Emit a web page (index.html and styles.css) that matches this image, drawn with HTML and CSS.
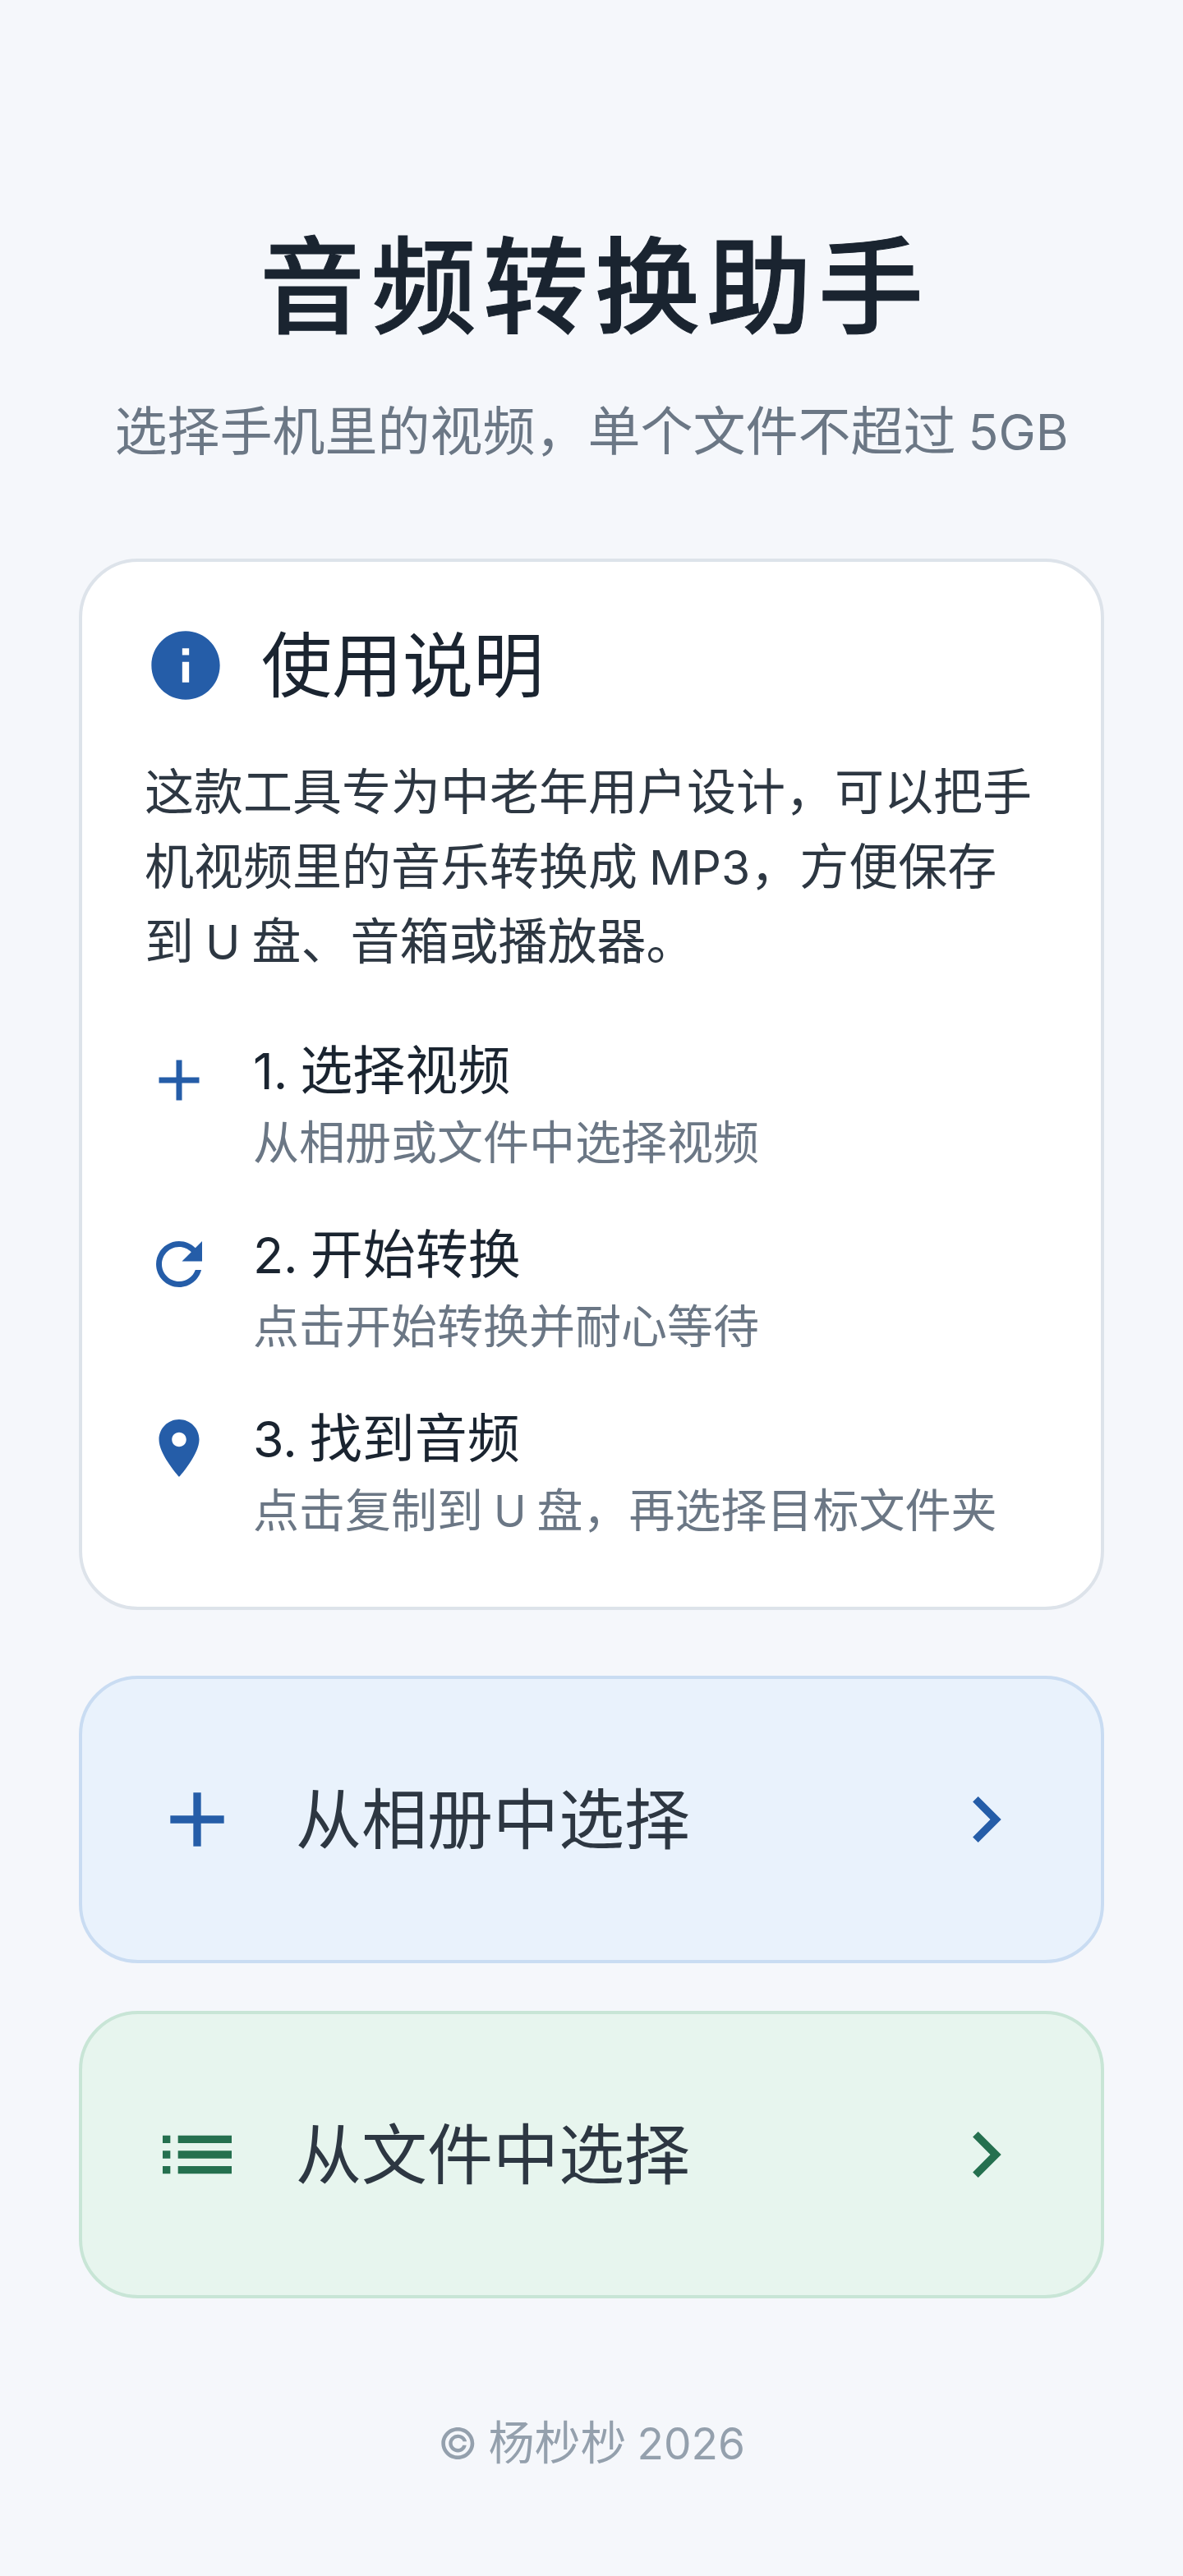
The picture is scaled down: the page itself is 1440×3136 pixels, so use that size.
FILE: index.html
```html
<!DOCTYPE html>
<html lang="zh-CN">
<head>
<meta charset="utf-8">
<title>音频转换助手</title>
<link rel="stylesheet" href="styles.css">
</head>
<body>
<main class="page">
  <header class="hero">
    <h1 class="title">音频转换助手</h1>
    <p class="subtitle">选择手机里的视频，单个文件不超过<span class="lat"> 5GB</span></p>
  </header>
  <section class="card">
    <div class="card-head">
      <svg class="info-icon" viewBox="0 0 24 24"><path fill="#255da8" d="M12 2C6.48 2 2 6.48 2 12s4.48 10 10 10 10-4.48 10-10S17.52 2 12 2zm1 15h-2v-6h2v6zm0-8h-2V7h2v2z"/></svg>
      <h2 class="card-title">使用说明</h2>
    </div>
    <p class="intro">这款工具专为中老年用户设计，可以把手机视频里的音乐转换成<span class="lat"> MP3</span>，方便保存到<span class="lat"> U </span>盘、音箱或播放器。</p>
    <ul class="steps">
      <li class="step">
        <svg class="step-icon" viewBox="0 0 24 24"><path fill="#255da8" d="M19 13h-6v6h-2v-6H5v-2h6V5h2v6h6v2z"/></svg>
        <div><div class="step-title"><span class="lat">1. </span>选择视频</div><div class="step-desc">从相册或文件中选择视频</div></div>
      </li>
      <li class="step">
        <svg class="step-icon" viewBox="0 0 24 24"><path fill="#255da8" d="M17.65 6.35C16.2 4.9 14.21 4 12 4c-4.42 0-7.99 3.58-7.99 8s3.57 8 7.99 8c3.73 0 6.84-2.55 7.73-6h-2.08c-.82 2.33-3.04 4-5.65 4-3.31 0-6-2.69-6-6s2.69-6 6-6c1.66 0 3.14.69 4.22 1.78L13 11h7V4l-2.35 2.35z"/></svg>
        <div><div class="step-title"><span class="lat">2. </span>开始转换</div><div class="step-desc">点击开始转换并耐心等待</div></div>
      </li>
      <li class="step">
        <svg class="step-icon" viewBox="0 0 24 24"><path fill="#255da8" d="M12 2C8.13 2 5 5.13 5 9c0 5.25 7 13 7 13s7-7.75 7-13c0-3.87-3.13-7-7-7zm0 9.5c-1.38 0-2.5-1.12-2.5-2.5s1.12-2.5 2.5-2.5 2.5 1.12 2.5 2.5-1.12 2.5-2.5 2.5z"/></svg>
        <div><div class="step-title"><span class="lat">3. </span>找到音频</div><div class="step-desc">点击复制到<span class="lat"> U </span>盘，再选择目标文件夹</div></div>
      </li>
    </ul>
  </section>
  <button class="action action-blue">
    <svg class="action-icon" viewBox="0 0 24 24"><path fill="#255da8" d="M19 13h-6v6h-2v-6H5v-2h6V5h2v6h6v2z"/></svg>
    <span class="action-label">从相册中选择</span>
    <svg class="chevron" viewBox="0 0 24 24"><path fill="#255da8" d="M10 6 8.59 7.41 13.17 12l-4.58 4.59L10 18l6-6z"/></svg>
  </button>
  <button class="action action-green">
    <svg class="action-icon" viewBox="0 0 24 24"><path fill="#25704f" d="M3 13h2v-2H3v2zm0 4h2v-2H3v2zm0-8h2V7H3v2zm4 4h14v-2H7v2zm0 4h14v-2H7v2zM7 7v2h14V7H7z"/></svg>
    <span class="action-label">从文件中选择</span>
    <svg class="chevron" viewBox="0 0 24 24"><path fill="#25704f" d="M10 6 8.59 7.41 13.17 12l-4.58 4.59L10 18l6-6z"/></svg>
  </button>
  <footer class="footer"><span class="lat">© </span>杨杪杪<span class="lat"> 2026</span></footer>
</main>
</body>
</html>
```

FILE: styles.css
```css
* { box-sizing: border-box; }
html, body { margin: 0; padding: 0; }
body {
  background: #f5f7fb;
  font-family: Inter, "Noto Sans CJK SC", sans-serif;
  color: #1a2430;
}
.page {
  width: 1440px;
  min-height: 3136px;
  padding: 273px 96px 0;
  display: flex;
  flex-direction: column;
}
.lat { font-size: 0.95em; line-height: 1; word-spacing: -2px; }
.hero { text-align: center; margin-bottom: 110px; }
.title {
  margin: 0;
  padding-left: 8px;
  font-size: 128px;
  line-height: 154px;
  font-weight: 500;
  -webkit-text-stroke: 1px #1a2430;
  letter-spacing: 8px;
  color: #1a2430;
}
.subtitle {
  margin: 53px 0 0;
  font-size: 64px;
  line-height: 90px;
  color: #6b7785;
}
.card {
  background: #fff;
  border: 4px solid #dde3ea;
  border-radius: 72px;
  padding: 76px 76px 74px;
}
.card-head { display: flex; align-items: center; gap: 42px; }
.info-icon { width: 100px; height: 100px; flex: none; }
.card-title { margin: 0; padding-top: 2px; font-size: 86px; line-height: 98px; font-weight: 400; color: #1a2430; }
.intro { margin: 59px 0 0; font-size: 60px; line-height: 91px; color: #2d3742; }
.steps { list-style: none; margin: 66px 0 0; padding: 0; display: flex; flex-direction: column; gap: 48px; }
.step { display: flex; gap: 48px; }
.step-icon { width: 84px; height: 84px; flex: none; margin-top: 15px; }
.step-title { font-size: 64px; line-height: 90px; color: #1a2430; }
.step-desc { font-size: 56px; line-height: 86px; color: #6b7785; }
.action {
  display: flex; align-items: center; width: 100%; height: 350px; padding: 0 84px;
  border-radius: 72px; font: inherit; margin-top: 80px;
}
.action-blue { background: #e9f2fc; border: 4px solid #c9dcf2; }
.action-green { background: #e7f5ee; border: 4px solid #c8e5d6; margin-top: 58px; }
.action-icon { width: 112px; height: 112px; flex: none; }
.action-label { flex: 1; text-align: left; margin-left: 64px; font-size: 80px; line-height: 100px; color: #2d3742; }
.chevron { width: 112px; height: 112px; flex: none; }
.footer { text-align: center; margin-top: 138px; font-size: 56px; line-height: 76px; color: #94a0ad; }
```
